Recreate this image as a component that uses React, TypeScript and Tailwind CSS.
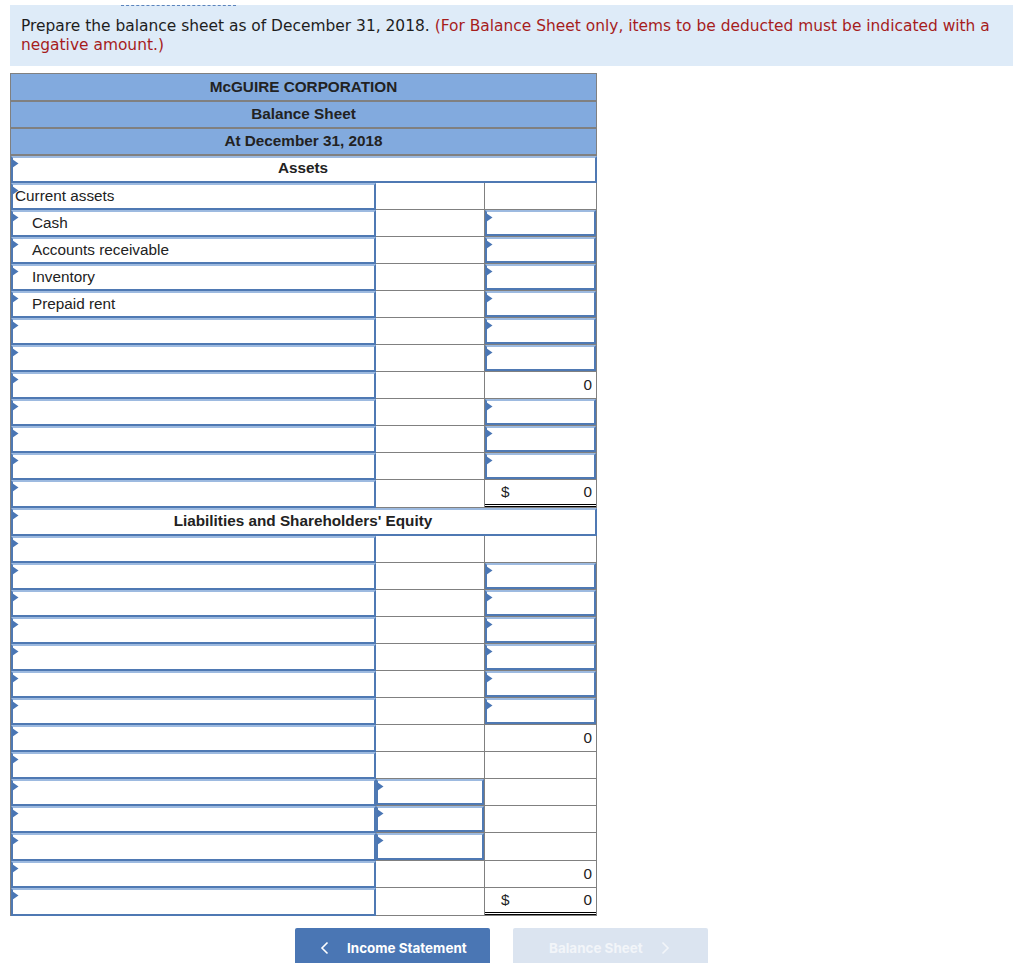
const HEAD = ['McGUIRE CORPORATION', 'Balance Sheet', 'At December 31, 2018']

type Row = {
  kind?: 'section'
  label?: string
  indent?: boolean
  midInput?: boolean
  right?: 'input' | 'empty' | 'zero' | 'total'
  tall?: boolean
}

const ROWS: Row[] = [
  { kind: 'section', label: 'Assets' },
  { label: 'Current assets', right: 'empty' },
  { label: 'Cash', indent: true, right: 'input' },
  { label: 'Accounts receivable', indent: true, right: 'input' },
  { label: 'Inventory', indent: true, right: 'input' },
  { label: 'Prepaid rent', indent: true, right: 'input' },
  { right: 'input' },
  { right: 'input' },
  { right: 'zero' },
  { right: 'input' },
  { right: 'input' },
  { right: 'input' },
  { right: 'total', tall: true },
  { kind: 'section', label: "Liabilities and Shareholders' Equity", tall: true },
  { right: 'empty' },
  { right: 'input' },
  { right: 'input' },
  { right: 'input' },
  { right: 'input' },
  { right: 'input' },
  { right: 'input' },
  { right: 'zero' },
  { right: 'empty' },
  { right: 'empty', midInput: true },
  { right: 'empty', midInput: true },
  { right: 'empty', midInput: true, tall: true },
  { right: 'zero' },
  { right: 'total', tall: true },
]

function Arrow() {
  return (
    <svg className="absolute left-[-1px] top-[1px]" width="7" height="9" viewBox="0 0 7 9">
      <path d="M0 0 L6.5 4.5 L0 9 Z" fill="#4a76b4" />
    </svg>
  )
}

function InputBox({ children }: { children?: React.ReactNode }) {
  return (
    <div className="relative flex h-full w-full items-center border-2 border-[#4f79b3] border-t-[#9dbae0] bg-white pb-[1px]">
      <Arrow />
      {children}
    </div>
  )
}

function BalanceRow({ row }: { row: Row }) {
  const height = row.tall ? 'h-[28px]' : 'h-[27px]'
  if (row.kind === 'section') {
    return (
      <div className={height}>
        <InputBox>
          <span className="-mt-[2px] w-full pr-[2px] text-center font-bold">{row.label}</span>
        </InputBox>
      </div>
    )
  }
  return (
    <div className={`flex ${height}`}>
      <div className="w-[365px]">
        <InputBox>
          {row.label && <span className={row.indent ? 'pl-[19px]' : 'pl-[2px]'}>{row.label}</span>}
        </InputBox>
      </div>
      <div className="w-[108px] border-b border-[#808080]">
        {row.midInput && <InputBox />}
      </div>
      <div className="w-[113px] border-x border-b border-[#808080]">
        {row.right === 'input' && <InputBox />}
        {row.right === 'zero' && <div className="pr-[4px] pt-[3px] text-right">0</div>}
        {row.right === 'total' && (
          <div className="flex h-full justify-between border-b-[3px] border-double border-black pl-[16px] pr-[4px] pt-[2px]">
            <span>$</span>
            <span>0</span>
          </div>
        )}
      </div>
    </div>
  )
}

export default function App() {
  return (
    <div className="relative h-[963px] w-[1024px] overflow-hidden bg-white font-['Liberation_Sans',sans-serif] text-[15.3px] leading-[20px] text-[#222222]">
      <div className="absolute left-[121px] top-[5px] w-[115px] border-t border-dashed border-[#5b84bd]" />
      <div className="ml-[10px] mt-[5px] h-[61px] w-[1003px] bg-[#deebf8] px-[11px] pt-[12px] font-['DejaVu_Sans',sans-serif] text-[15.44px] leading-[19px] text-[#1d1d1d]">
        Prepare the balance sheet as of December 31, 2018.{' '}
        <span className="text-[#a61c1c]">
          (For Balance Sheet only, items to be deducted must be indicated with a negative amount.)
        </span>
      </div>

      <div className="ml-[10px] mt-[7px] w-[587px] border-l border-t border-[#808080]">
        {HEAD.map((text, i) => (
          <div
            key={text}
            className={`flex items-center justify-center border-b-2 border-r border-[#808080] bg-[#82aade] font-bold ${i === 0 ? 'h-[28px]' : 'h-[27px] pb-[2px]'}`}
          >
            {text}
          </div>
        ))}
        {ROWS.map((row, i) => (
          <BalanceRow key={i} row={row} />
        ))}
      </div>

      <div className="ml-[295px] mt-[12px] flex gap-[23px] font-['Inter',sans-serif] text-[13.45px] font-bold">
        <div className="flex h-[40px] w-[195px] items-center rounded-t-[2px] bg-[#4a76b4] pl-[25px] text-white">
          <svg width="9" height="14" viewBox="0 0 9 14" fill="none" stroke="#ffffff" strokeWidth="1.6">
            <path d="M7.5 1.5 L2 7 L7.5 12.5" />
          </svg>
          <span className="ml-[18px]">Income Statement</span>
        </div>
        <div className="flex h-[40px] w-[195px] items-center rounded-t-[2px] bg-[#dbe4f0] pl-[36px] text-[#f2f5f9]">
          <span>Balance Sheet</span>
          <svg className="ml-[18px]" width="9" height="14" viewBox="0 0 9 14" fill="none" stroke="#f2f5f9" strokeWidth="1.6">
            <path d="M1.5 1.5 L7 7 L1.5 12.5" />
          </svg>
        </div>
      </div>
    </div>
  )
}
